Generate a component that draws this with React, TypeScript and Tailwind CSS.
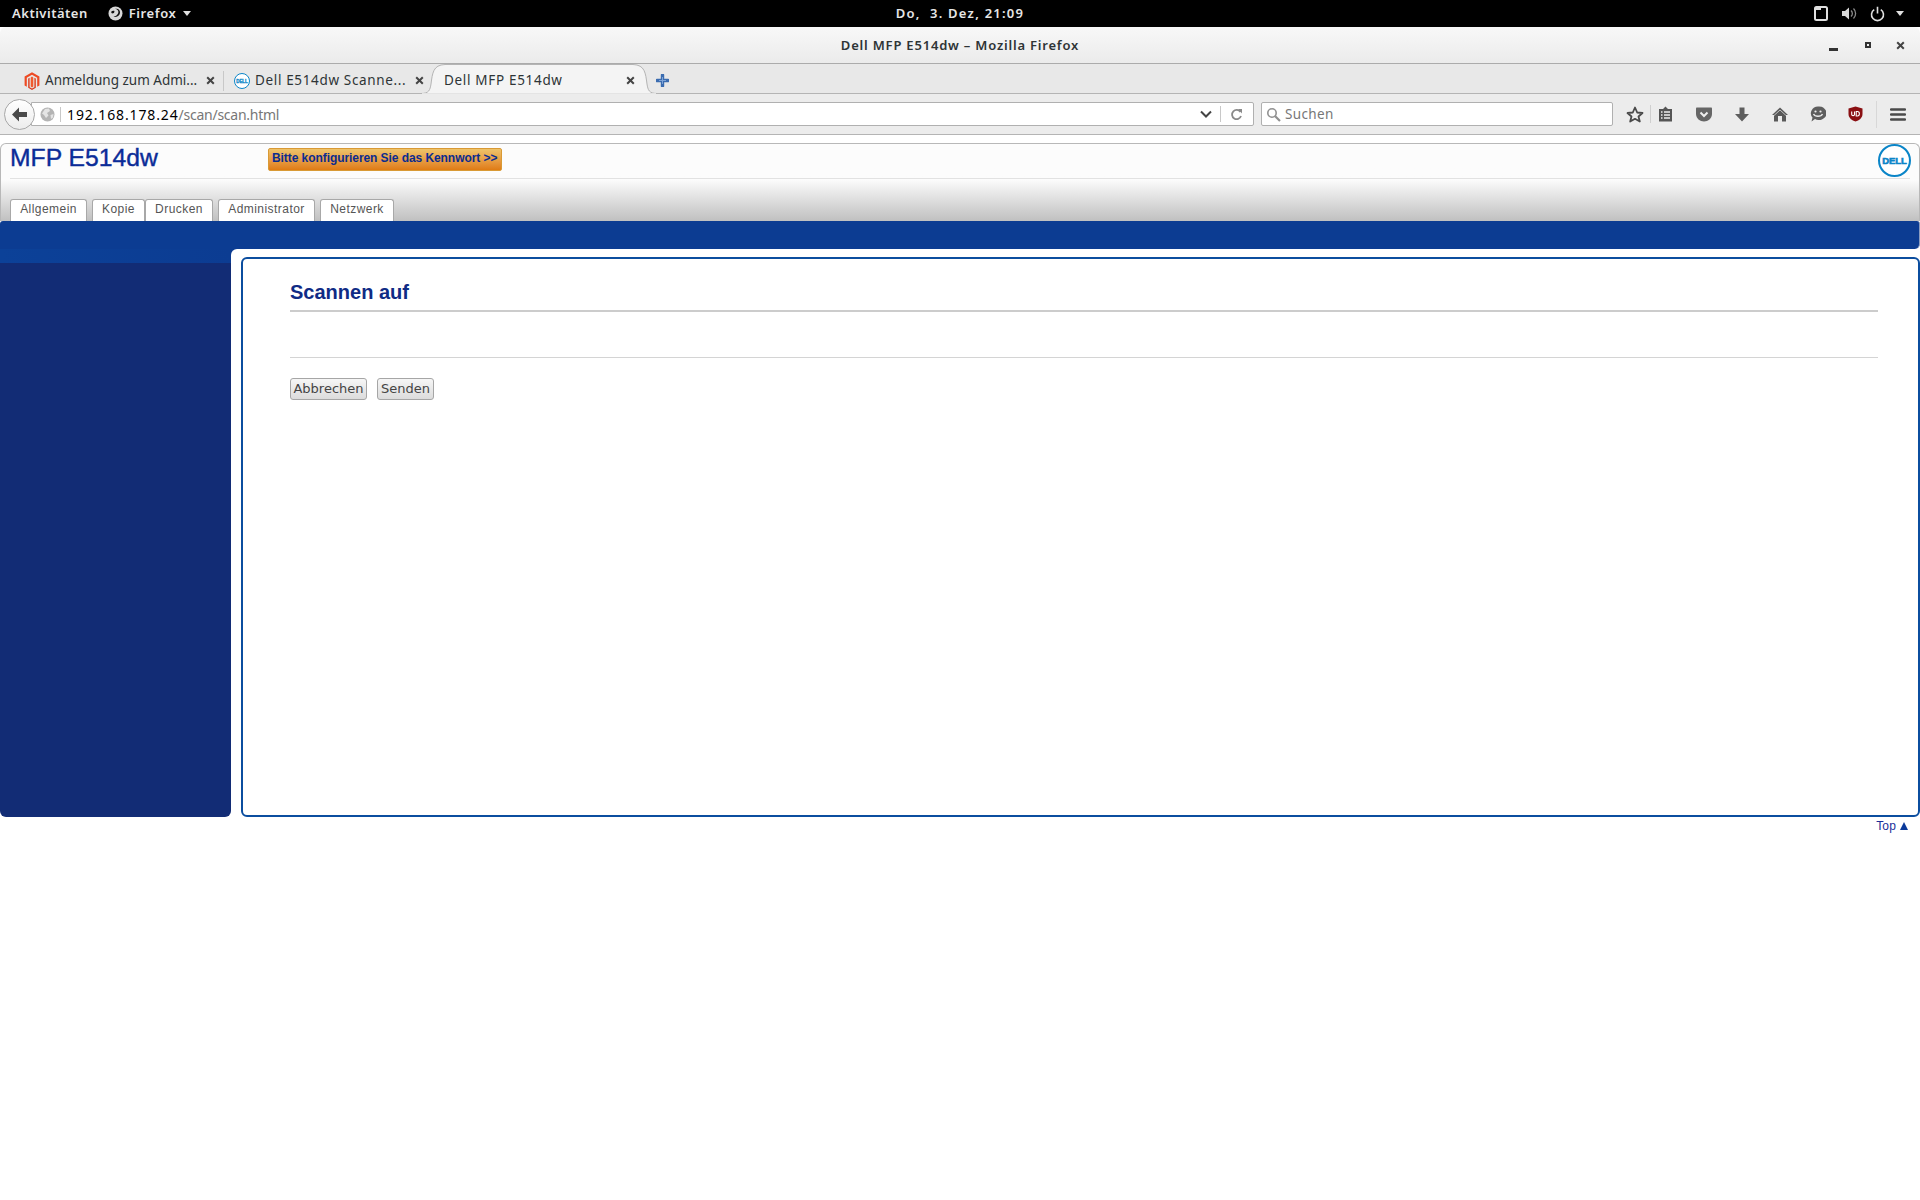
import React from "react";

const ui = { fontFamily: '"Noto Sans", "Open Sans", sans-serif' };
const page = { fontFamily: '"Liberation Sans", Arial, sans-serif' };

function Magento() {
  return (
    <svg width="16" height="18" viewBox="0 0 16 18">
      <path d="M8 0.3 L15.4 4.5 V13.4 L13.2 14.7 V5.7 L8 2.7 L2.8 5.7 V14.7 L0.6 13.4 V4.5 Z" fill="#ee4a23" />
      <path d="M8 4.6 L9.3 5.4 V14.6 L8 15.4 L6.7 14.6 V5.4 Z" fill="#f15a2c" />
      <path d="M4.2 6.6 L5.6 5.8 V15.2 L8 16.6 L10.4 15.2 V5.8 L11.8 6.6 V15.8 L8 17.9 L4.2 15.8 Z" fill="#d93a1c" />
    </svg>
  );
}

function DellLogo({ size, stroke, fs }: { size: number; stroke: number; fs: number }) {
  return (
    <svg width={size} height={size} viewBox="0 0 32 32">
      <circle cx="16" cy="16" r={16 - stroke / 2} fill="#fff" stroke="#0a85c8" strokeWidth={stroke} />
      <text x="16" y="19.4" textAnchor="middle" fontFamily="Liberation Sans" fontWeight="700" fontSize={fs} letterSpacing="-0.1" stroke="#0a85c8" strokeWidth="0.6" fill="#0a85c8">DELL</text>
    </svg>
  );
}

function Tab({ w, label, icon, track }: { w: string; label: string; icon: React.ReactNode; track: string }) {
  return (
    <div className={`flex items-center h-full shrink-0 ${w}`}>
      <span className="w-[20px] flex justify-center shrink-0">{icon}</span>
      <span className={`ml-[3px] text-[13.5px] text-[#2e3436] whitespace-nowrap ${track}`}>{label}</span>
    </div>
  );
}

function CloseX({ className = "" }: { className?: string }) {
  return (
    <svg width="9" height="9" viewBox="0 0 9 9" className={`shrink-0 ${className}`}>
      <path d="M1.2 1.2 L7.8 7.8 M7.8 1.2 L1.2 7.8" stroke="#444" strokeWidth="2" />
    </svg>
  );
}

function PageTab({ w, label, ml }: { w: string; label: string; ml: string }) {
  return (
    <div className={`${w} ${ml} h-[22px] shrink-0 bg-white border border-b-0 border-[#a8a8a8] rounded-t-[3px] flex items-center justify-center pb-[3px] text-[12px] tracking-[0.45px] text-[#555]`}>
      {label}
    </div>
  );
}

export default function App() {
  return (
    <div className="w-[1920px] h-[1200px] bg-white flex flex-col overflow-hidden" style={page}>
      {/* GNOME top bar */}
      <div className="h-[27px] bg-black grid grid-cols-[1fr_auto_1fr] items-center text-[#e6e6e6] text-[13px] font-semibold shrink-0" style={ui}>
        <div className="flex items-center pl-[12px]">
          <span className="tracking-[0.5px]">Aktivitäten</span>
          <svg width="15" height="15" viewBox="0 0 15 15" className="ml-[20px]">
            <circle cx="7.5" cy="7.5" r="7" fill="#d8d8d8" />
            <path d="M7 3 C10 3 11 5.5 10 7.5 C9 9.5 7.5 10 5.5 11 C8.5 11.5 11.5 10 12 7 C12.3 4 10 2 7 3 Z M3 6 C4 5 5 4.5 6.5 5 L6 7 L4 7.5 Z" fill="#111" />
          </svg>
          <span className="ml-[6px] tracking-[0.6px]">Firefox</span>
          <span className="ml-[7px] w-0 h-0 border-x-[4.5px] border-x-transparent border-t-[5px] border-t-[#e0e0e0]" />
        </div>
        <div className="tracking-[1.25px] whitespace-pre">Do,  3. Dez, 21:09</div>
        <div className="flex items-center justify-end pr-[16px]">
          <svg width="14" height="15" viewBox="0 0 14 15">
            <rect x="1" y="1" width="12" height="13" rx="1.5" fill="none" stroke="#e0e0e0" strokeWidth="2" />
            <path d="M1 3 H7" stroke="#e0e0e0" strokeWidth="2" />
          </svg>
          <svg width="16" height="15" viewBox="0 0 16 15" className="ml-[13px]">
            <path d="M1 5 H4 L8 1.5 V13.5 L4 10 H1 Z" fill="#d8d8d8" />
            <path d="M10 4.5 A4 4 0 0 1 10 10.5 M12.5 2.5 A7 7 0 0 1 12.5 12.5" fill="none" stroke="#8a8a8a" strokeWidth="1.3" />
          </svg>
          <svg width="15" height="16" viewBox="0 0 15 16" className="ml-[13px]">
            <path d="M4.2 3.6 A6 6 0 1 0 10.8 3.6 M7.5 0.8 V7.5" fill="none" stroke="#e0e0e0" strokeWidth="1.6" />
          </svg>
          <span className="ml-[11px] w-0 h-0 border-x-[4.5px] border-x-transparent border-t-[5px] border-t-[#e0e0e0]" />
        </div>
      </div>

      {/* Window title */}
      <div className="h-[37px] shrink-0 rounded-t-[6px] bg-gradient-to-b from-[#f8f8f8] to-[#ebebeb] border-b border-[#ababab] grid grid-cols-[1fr_auto_1fr] items-center" style={ui}>
        <div />
        <div className="text-[13px] font-semibold text-[#2e3436] tracking-[0.8px] pt-[1px]">Dell MFP E514dw – Mozilla Firefox</div>
        <div className="flex items-center justify-end pr-[15px]">
          <span className="w-[9px] h-[3px] bg-[#333] mt-[8px]" />
          <span className="ml-[27px] w-[6px] h-[6px] border-2 border-[#333]" />
          <CloseX className="ml-[25px]" />
        </div>
      </div>

      {/* Tab strip */}
      <div className="h-[30px] shrink-0 bg-[#e8e8e8] border-b border-[#b4b4b4] flex items-center pl-[22px] pt-[4px]" style={ui}>
        <div className="flex items-center h-[20px] w-[202px] shrink-0 border-r border-[#c8c8c8]">
          <Tab w="w-[165px]" track="tracking-[0px]" label="Anmeldung zum Admi..." icon={<Magento />} />
          <CloseX className="ml-[19px]" />
        </div>
        <div className="flex items-center h-[20px] w-[200px] shrink-0 pl-[8px]">
          <Tab w="w-[183px]" track="tracking-[0.65px]" label="Dell E514dw Scanne..." icon={<DellLogo size={16} stroke={2} fs={9} />} />
          <CloseX />
        </div>
        <div className="relative h-[30px] w-[236px] shrink-0 -ml-[3px] -mr-[7px] -mt-[4px]">
          <svg width="236" height="30" viewBox="0 0 236 30" className="absolute left-0 top-0">
            <path d="M0 29.5 C8 29.5 9 26 10 20 C11.5 9 12 1 24 0.5 H212 C224 1 224.5 9 226 20 C227 26 228 29.5 236 29.5 Z" fill="#f4f4f4" stroke="#b4b4b4" />
            <path d="M1 30 H235" stroke="#f4f4f4" strokeWidth="1.5" />
          </svg>
          <div className="relative h-full flex items-center pl-[23px] pt-[4px] text-[13.5px] text-[#2e3436] tracking-[0.68px]">
            <span>Dell MFP E514dw</span>
            <CloseX className="absolute left-[205px] top-[12px]" />
          </div>
        </div>
        <svg width="13" height="13" viewBox="0 0 13 13" className="ml-[6px]">
          <path d="M6.5 1 V12 M1 6.5 H12" stroke="#3b6cb0" strokeWidth="3.4" strokeLinecap="round" />
          <path d="M6.5 3 V10 M3 6.5 H10" stroke="#7ea4d8" strokeWidth="1" />
        </svg>
      </div>

      {/* Nav bar */}
      <div className="h-[41px] shrink-0 bg-[#ececec] border-b border-[#b4b4b4] flex items-center pl-[4px]" style={ui}>
        <div className="relative z-10 w-[31px] h-[31px] shrink-0 rounded-full border border-[#a8a8a8] bg-gradient-to-b from-white to-[#ececec] flex items-center justify-center">
          <svg width="17" height="15" viewBox="0 0 17 15">
            <path d="M8 0.5 L1 7.5 L8 14.5 V10 H16 V5 H8 Z" fill="#4a4a4a" />
          </svg>
        </div>
        <div className="-ml-[4px] w-[1223px] h-[24px] shrink-0 bg-white border border-[#b0b0b0] rounded-r-[2px] flex items-center">
          <svg width="15" height="15" viewBox="0 0 15 15" className="ml-[8px]">
            <circle cx="7.5" cy="7.5" r="7" fill="#b4b4b4" />
            <path d="M5 2 L9 1.5 L10 4 L7 6 L8.5 8.5 L6 11 L4 8 L2 6.5 Z M10.5 8 L13.5 7 L13 10.5 L11 12 Z" fill="#e4e4e4" />
          </svg>
          <span className="ml-[5px] w-px h-[15px] bg-[#c8c8c8]" />
          <span className="ml-[6px] text-[14px] -tracking-[0.25px] text-[#777]"><span className="text-black tracking-[0.87px]">192.168.178.24</span>/scan/scan.html</span>
          <span className="flex-1" />
          <svg width="12" height="8" viewBox="0 0 12 8">
            <path d="M1 1.5 L6 6.5 L11 1.5" fill="none" stroke="#444" strokeWidth="2" />
          </svg>
          <span className="ml-[8px] w-px h-[16px] bg-[#c8c8c8]" />
          <svg width="13" height="13" viewBox="0 0 13 13" className="ml-[9px] mr-[10px]">
            <path d="M10.5 4 A4.6 4.6 0 1 0 11 8" fill="none" stroke="#8a8a8a" strokeWidth="1.8" />
            <path d="M8 1 L12 1 L12 5.5 Z" fill="#8a8a8a" />
          </svg>
        </div>
        <div className="ml-[7px] w-[352px] h-[24px] shrink-0 bg-white border border-[#b0b0b0] rounded-[2px] flex items-center pl-[4px]">
          <svg width="15" height="15" viewBox="0 0 15 15">
            <circle cx="6" cy="6" r="4.2" fill="none" stroke="#909090" strokeWidth="1.6" />
            <path d="M9.2 9.2 L14 14" stroke="#909090" strokeWidth="2.2" />
          </svg>
          <span className="ml-[4px] text-[13.5px] text-[#777] tracking-[0.35px]">Suchen</span>
        </div>
        <svg width="18" height="17" viewBox="0 0 18 17" className="ml-[13px]">
          <path d="M9 1.5 L11.2 6.5 L16.5 7 L12.5 10.5 L13.8 15.5 L9 12.8 L4.2 15.5 L5.5 10.5 L1.5 7 L6.8 6.5 Z" fill="none" stroke="#4a4a4a" strokeWidth="1.8" strokeLinejoin="round" />
        </svg>
        <span className="ml-[6px] w-px h-[18px] bg-[#cfcfcf]" />
        <svg width="15" height="16" viewBox="0 0 15 16" className="ml-[7px]">
          <path d="M1 3 H5 L7.5 0.5 L10 3 H14 V15.5 H1 Z" fill="#555" />
          <path d="M3 6 H4.5 M6 6 H12 M3 9 H4.5 M6 9 H12 M3 12 H4.5 M6 12 H12" stroke="#eee" strokeWidth="1.4" />
        </svg>
        <svg width="16" height="15" viewBox="0 0 16 15" className="ml-[23px]">
          <path d="M1 0.5 H15 C15.6 0.5 16 1 16 1.5 V7 C16 11.5 12 14.5 8 14.5 C4 14.5 0 11.5 0 7 V1.5 C0 1 0.4 0.5 1 0.5 Z" fill="#666" />
          <path d="M4.5 5.5 L8 9 L11.5 5.5" fill="none" stroke="#eee" strokeWidth="2" />
        </svg>
        <svg width="14" height="15" viewBox="0 0 14 15" className="ml-[23px]">
          <path d="M4.5 0.5 H9.5 V7 H14 L7 14.5 L0 7 H4.5 Z" fill="#5e5e5e" />
        </svg>
        <svg width="16" height="15" viewBox="0 0 16 15" className="ml-[23px]">
          <path d="M8 0.5 L16 8 H14 V14.5 H10 V9 H6 V14.5 H2 V8 H0 Z" fill="#5a5a5a" />
          <path d="M8 3 L2 8.5" stroke="#eee" strokeWidth="0.7" />
          <path d="M8 3 L14 8.5" stroke="#eee" strokeWidth="0.7" />
        </svg>
        <svg width="16" height="16" viewBox="0 0 16 16" className="ml-[22px]">
          <path d="M8 0.5 A7.5 6.8 0 1 1 5 13 L1.5 15.5 L2.5 11.5 A7.5 6.8 0 0 1 8 0.5 Z" fill="#5e5e5e" />
          <circle cx="5.5" cy="5.5" r="1.1" fill="#eee" />
          <circle cx="10.5" cy="5.5" r="1.1" fill="#eee" />
          <path d="M3.5 8 C5 11 11 11 12.5 8" fill="none" stroke="#eee" strokeWidth="1.3" />
        </svg>
        <svg width="15" height="16" viewBox="0 0 15 16" className="ml-[22px]">
          <path d="M7.5 0.5 L14.5 2.5 V8 C14.5 12 11 14.5 7.5 15.5 C4 14.5 0.5 12 0.5 8 V2.5 Z" fill="#8a0f12" />
          <path d="M3.7 5.5 V8.5 C3.7 10 6.5 10 6.5 8.5 V5.5" fill="none" stroke="#fff" strokeWidth="1.1" />
          <path d="M8.2 5.5 H9.5 C12 5.5 12 10 9.5 10 H8.2 Z" fill="none" stroke="#fff" strokeWidth="1.1" />
        </svg>
        <span className="ml-[13px] w-px h-[27px] bg-[#d8d8d8]" />
        <svg width="16" height="13" viewBox="0 0 16 13" className="ml-[13px]">
          <path d="M1 1.5 H15 M1 6.5 H15 M1 11.5 H15" stroke="#4a4a4a" strokeWidth="2.4" strokeLinecap="round" />
        </svg>
      </div>

      {/* Page */}
      <div className="pt-[8px] shrink-0">
        <div className="h-[78px] bg-gradient-to-b from-[#fcfcfc] from-[46%] to-[#c0c0c0] border border-b-0 border-[#b8b8b8] rounded-t-[6px] flex flex-col">
          <div className="h-[35px] mx-[9px] border-b border-[#e2e2e2] flex items-start shrink-0">
            <div className="w-[258px] text-[24.7px] leading-[27px] text-[#0b2c98] [-webkit-text-stroke:0.4px_#0b2c98]">MFP E514dw</div>
            <div className="mt-[4px] w-[234px] h-[23px] rounded-[2px] border border-[#d99a35] bg-gradient-to-b from-[#eec369] to-[#df7b12] text-[12px] font-bold text-[#0b2c8f] flex items-center pl-[3px] pb-[3px] whitespace-nowrap tracking-[-0.07px]">
              Bitte konfigurieren Sie das Kennwort &gt;&gt;
            </div>
            <div className="ml-auto -mr-[1px] relative z-10">
              <DellLogo size={33} stroke={2} fs={9.2} />
            </div>
          </div>
          <div className="flex mt-auto pl-[9px]">
            <PageTab w="w-[77px]" ml="" label="Allgemein" />
            <PageTab w="w-[53px]" ml="ml-[5px]" label="Kopie" />
            <PageTab w="w-[68px]" ml="" label="Drucken" />
            <PageTab w="w-[97px]" ml="ml-[5px]" label="Administrator" />
            <PageTab w="w-[74px]" ml="ml-[5px]" label="Netzwerk" />
          </div>
        </div>
        <div className="h-[28px] bg-[#0c3c92] rounded-t-[3px] rounded-br-[5px] border-r border-[#8a9cc0]" />
        <div className="h-[568px] flex">
          <div className="w-[231px] shrink-0 flex flex-col">
            <div className="h-[14px] bg-gradient-to-r from-[#0c4198] to-[#0c3c92] shrink-0" />
            <div className="flex-1 bg-[#122c75] rounded-b-[6px]" />
          </div>
          <div className="relative flex-1 pl-[10px] pt-[8px]">
            <div className="absolute left-0 top-0 w-[6px] h-[6px] bg-[#0c3c92]">
              <div className="w-full h-full bg-white rounded-tl-[6px]" />
            </div>
            <div className="h-[560px] border-2 border-[#0b4d9f] rounded-[6px] pl-[47px] pr-[40px] bg-white">
              <h1 className="h-[53px] pt-[20px] text-[20px] leading-[26px] font-bold text-[#0f2b85] border-b-2 border-[#cccccc]">Scannen auf</h1>
              <div className="h-[46px] border-b border-[#d4d4d4]" />
              <div className="flex gap-[10px] mt-[20px]" style={{ fontFamily: '"DejaVu Sans", sans-serif' }}>
                <button className="w-[77px] h-[22px] rounded-[3px] border border-[#a6a6a6] bg-gradient-to-b from-[#f6f6f6] to-[#dcdcdc] text-[13px] text-[#444]">Abbrechen</button>
                <button className="w-[57px] h-[22px] rounded-[3px] border border-[#a6a6a6] bg-gradient-to-b from-[#f6f6f6] to-[#dcdcdc] text-[13px] text-[#444]">Senden</button>
              </div>
            </div>
          </div>
        </div>
        <div className="flex justify-end items-center pr-[12px] pt-[1px] text-[12px] leading-[16px] text-[#1a2f9a]">
          <span className="tracking-[0.15px]">Top</span>
          <span className="ml-[4px] w-0 h-0 border-x-[4.5px] border-x-transparent border-b-[8px] border-b-[#0b3a9a]" />
        </div>
      </div>
    </div>
  );
}
